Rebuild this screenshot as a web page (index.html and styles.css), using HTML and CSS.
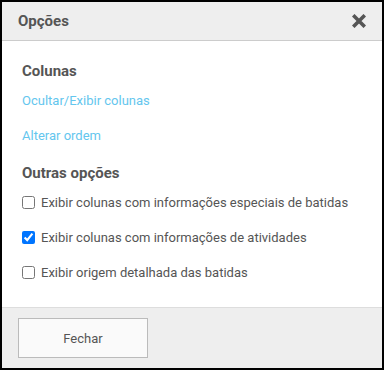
FILE: index.html
```html
<!DOCTYPE html>
<html>
<head>
  <meta charset="utf-8">
  <link rel="stylesheet" href="styles.css">
</head>
<body>
  <div class="modal">
    <div class="modal-header">
      <span class="modal-title">Opções</span>
      <span class="close">
        <svg width="14" height="14" viewBox="0 0 14 14">
          <path d="M2.5 2.5 L11.5 11.5 M11.5 2.5 L2.5 11.5" stroke="#555" stroke-width="3.6" stroke-linecap="square"/>
        </svg>
      </span>
    </div>

    <div class="modal-body">
      <h4 class="section-title">Colunas</h4>
      <a class="link" href="#">Ocultar/Exibir colunas</a>
      <a class="link" href="#">Alterar ordem</a>

      <h4 class="section-title second">Outras opções</h4>
      <label class="option"><input type="checkbox"> Exibir colunas com informações especiais de batidas</label>
      <label class="option"><input type="checkbox" checked> Exibir colunas com informações de atividades</label>
      <label class="option"><input type="checkbox"> Exibir origem detalhada das batidas</label>
    </div>

    <div class="modal-footer">
      <button class="btn">Fechar</button>
    </div>
  </div>
</body>
</html>
```

FILE: styles.css
```css
body {
  margin: 0;
  font-family: Roboto, "Liberation Sans", sans-serif;
  color: #555;
}

.modal {
  width: 380px;
  height: 366px;
  border: 2px solid #000;
  background: white;
  display: flex;
  flex-direction: column;
}

.modal-header {
  height: 38px;
  padding: 0 16px;
  background: #eee;
  border-bottom: 1px solid #ccc;
  display: flex;
  justify-content: space-between;
  align-items: center;
}

.modal-title {
  font-size: 15px;
  font-weight: bold;
}

.close {
  display: flex;
  cursor: pointer;
}

.modal-body {
  flex: 1;
  padding: 20px 20px 0;
  display: flex;
  flex-direction: column;
  align-items: flex-start;
}

.section-title {
  margin: 0 0 10px;
  font-size: 15px;
  line-height: 20px;
  font-weight: bold;
}

.section-title.second {
  margin-top: 17px;
  margin-bottom: 9px;
}

.link {
  display: block;
  font-size: 13px;
  line-height: 20px;
  color: #64c6ee;
  text-decoration: none;
}

.link + .link {
  margin-top: 15px;
}

.option {
  display: flex;
  align-items: center;
  gap: 6px;
  height: 20px;
  font-size: 13px;
}

.option + .option {
  margin-top: 15px;
}

.option input {
  margin: 0;
  width: 13px;
  height: 13px;
}

.modal-footer {
  height: 61px;
  padding: 10px 16px 0;
  box-sizing: border-box;
  background: #eee;
  border-top: 1px solid #ddd;
}

.btn {
  width: 130px;
  height: 40px;
  background: #fafafa;
  border: 1px solid #bbb;
  border-radius: 0;
  font-family: Roboto, "Liberation Sans", sans-serif;
  font-size: 13px;
  color: #555;
  cursor: pointer;
}
```
